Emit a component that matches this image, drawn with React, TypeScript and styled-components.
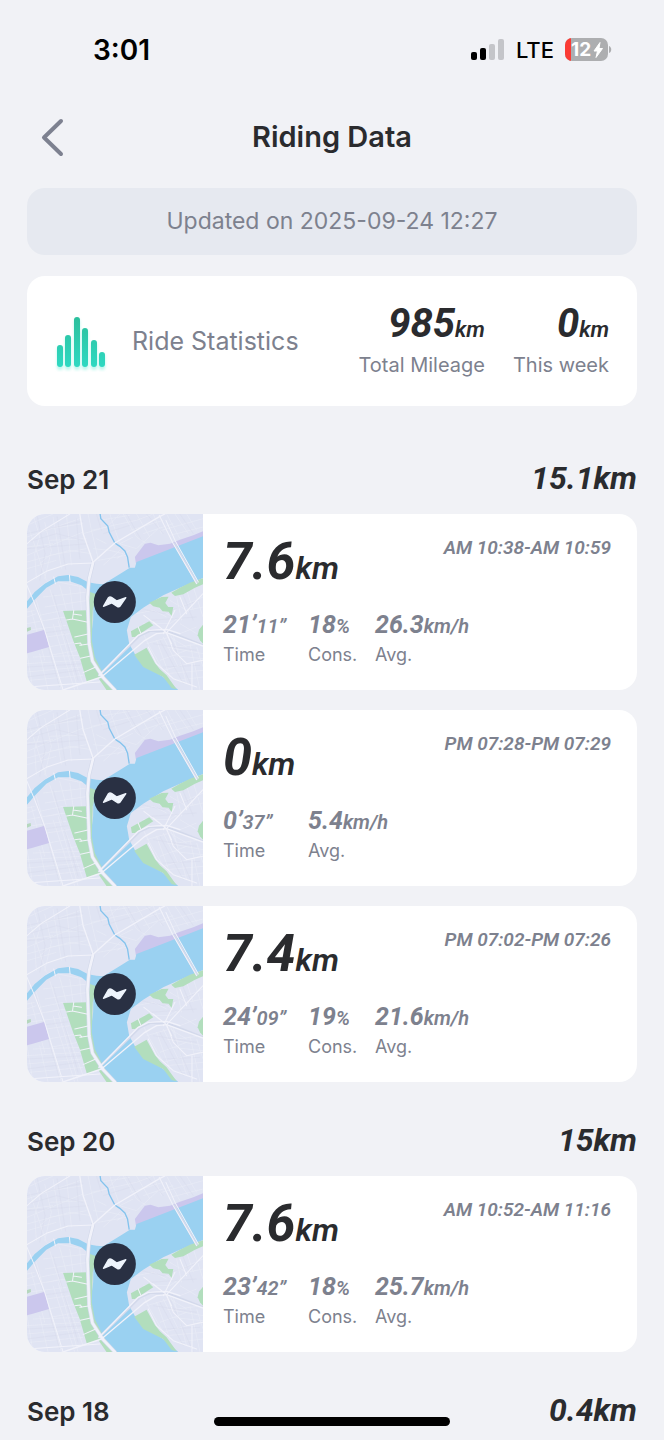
import React from "react";
import styled, { createGlobalStyle } from "styled-components";

const color = {
  page: "#f1f2f6",
  ink: "#2a2b2e",
  muted: "#7d818e",
  card: "#ffffff",
  banner: "#e6e9f0",
};

const sans = `Inter, "Liberation Sans", sans-serif`;
const numeric = `Roboto, "Liberation Sans", sans-serif`;

const GlobalStyle = createGlobalStyle`
  *, *::before, *::after { box-sizing: border-box; }
  body {
    margin: 0;
    background: ${color.page};
    color: ${color.ink};
    font-family: ${sans};
  }
  h1, h2, p, ul, dl, dd { margin: 0; padding: 0; }
  ul { list-style: none; }
`;

const Screen = styled.div`
  min-height: 100vh;
  background: ${color.page};
`;

const StatusBar = styled.div`
  display: flex;
  justify-content: space-between;
  align-items: center;
  height: 100px;
  padding: 0 52px 0 93px;
  color: #000;
`;

const Clock = styled.time`
  font-size: 28px;
  line-height: 32px;
  font-weight: 600;
`;

const StatusIcons = styled.div`
  display: flex;
  align-items: center;
  gap: 11px;
  font-size: 22px;
  line-height: 28px;
  font-weight: 500;
`;

const BatteryText = styled.text`
  font-family: ${sans};
  font-size: 19px;
  font-weight: 700;
  fill: #fff;
`;

const NavBar = styled.header`
  display: grid;
  grid-template-columns: 48px 1fr 48px;
  align-items: center;
  height: 74px;
  padding: 0 28px;
`;

const BackButton = styled.button`
  display: flex;
  align-items: center;
  justify-content: center;
  width: 48px;
  height: 48px;
  padding: 0;
  border: 0;
  background: none;
  cursor: pointer;
`;

const Title = styled.h1`
  font-size: 29px;
  line-height: 36px;
  font-weight: 600;
  text-align: center;
`;

const Content = styled.main`
  padding: 14px 27px 0;
`;

const Banner = styled.p`
  padding: 18px 20px;
  border-radius: 18px;
  background: ${color.banner};
  color: ${color.muted};
  font-size: 23px;
  line-height: 31px;
  text-align: center;
`;

const StatsCard = styled.section`
  display: flex;
  align-items: center;
  margin: 21px 0 54px;
  padding: 24px 28px 24px 24px;
  min-height: 130px;
  border-radius: 18px;
  background: ${color.card};
`;

const StatsTitle = styled.h2`
  flex: 1;
  margin-left: 21px;
  color: ${color.muted};
  font-size: 25px;
  line-height: 32px;
  font-weight: 400;
`;

const Totals = styled.dl`
  display: flex;
  gap: 28px;
`;

const Total = styled.div`
  display: flex;
  flex-direction: column-reverse;
  text-align: right;
`;

const Label = styled.dt<{ $size: number }>`
  color: ${color.muted};
  font-size: ${(p) => p.$size}px;
  line-height: 28px;
`;

const TotalValue = styled.dd`
  font: italic 700 40px/42px ${numeric};
`;

const Unit = styled.span<{ $size: number }>`
  font-size: ${(p) => p.$size}px;
  font-weight: 600;
`;

const Day = styled.section`
  margin-bottom: 40px;

  &:last-child { margin-bottom: 0; }
`;

const DayHeader = styled.div`
  display: flex;
  justify-content: space-between;
  align-items: baseline;
  height: 40px;
`;

const DayName = styled.h2`
  font-size: 26px;
  line-height: 40px;
  font-weight: 600;
`;

const DayTotal = styled.p`
  font: italic 700 32px/36px ${numeric};
`;

const RideList = styled.ul`
  display: flex;
  flex-direction: column;
  gap: 20px;
  margin-top: 14px;
`;

const RideCard = styled.li`
  display: flex;
  min-height: 176px;
  border-radius: 18px;
  background: ${color.card};
  overflow: hidden;
`;

const MapArt = styled.svg`
  flex: none;
  width: 176px;
  height: 176px;
`;

const RideBody = styled.div`
  flex: 1;
  padding: 21px 26px 0 20px;
`;

const RideTop = styled.div`
  display: flex;
  justify-content: space-between;
  align-items: flex-start;
`;

const Distance = styled.p`
  font: italic 700 52px/54px ${numeric};
`;

const Period = styled.p`
  color: ${color.muted};
  font: italic 600 19px/26px ${numeric};
`;

const Metrics = styled.dl`
  display: flex;
  margin-top: 15px;
`;

const Metric = styled.div<{ $width: number }>`
  display: flex;
  flex-direction: column-reverse;
  min-width: ${(p) => p.$width}px;
`;

const MetricValue = styled.dd`
  color: ${color.muted};
  font: italic 700 25px/30px ${numeric};
`;

const HomeIndicator = styled.div`
  position: fixed;
  bottom: 14px;
  left: 50%;
  width: 236px;
  height: 9px;
  margin-left: -118px;
  border-radius: 5px;
  background: #000;
`;

function Signal() {
  return (
    <svg width="34" height="22" viewBox="0 0 34 22" role="img" aria-label="Signal: 2 of 4 bars">
      <rect x="0" y="13" width="6" height="8" rx="2" />
      <rect x="9" y="9" width="6" height="12" rx="2" />
      <rect x="18" y="5" width="6" height="16" rx="2" fill="#c4c5c9" />
      <rect x="27" y="0" width="6" height="21" rx="2" fill="#c4c5c9" />
    </svg>
  );
}

function Battery() {
  return (
    <svg width="47" height="24" viewBox="0 0 47 24" role="img" aria-label="Battery 12%, charging">
      <clipPath id="battery-shell">
        <rect width="43" height="23" rx="7" />
      </clipPath>
      <g clipPath="url(#battery-shell)">
        <rect width="43" height="23" fill="#adaeb0" />
        <rect width="6" height="23" fill="#fb3b35" />
      </g>
      <path d="M44 8c3 1 3 6 0 7z" fill="#adaeb0" />
      <BatteryText x="6" y="18">12</BatteryText>
      <path d="M35 4.500L29 13H32.500L31 19.500L37.500 10.500H34z" fill="#fff" stroke="#fff" strokeLinejoin="round" />
    </svg>
  );
}

const bars = [
  { x: 4, top: 31 },
  { x: 12, top: 21 },
  { x: 21, top: 3 },
  { x: 29, top: 14 },
  { x: 38, top: 26 },
  { x: 46, top: 38 },
];

function BarsIcon() {
  return (
    <svg width="60" height="62" viewBox="-2 -4 60 62" aria-hidden="true">
      <defs>
        <linearGradient id="bar-fill" gradientUnits="userSpaceOnUse" x1="0" y1="3" x2="0" y2="53">
          <stop offset="0" stopColor="#2bbf9c" />
          <stop offset="1" stopColor="#2fd9c2" />
        </linearGradient>
        <filter id="bar-glow" x="-20%" y="-20%" width="140%" height="140%">
          <feGaussianBlur stdDeviation="1.500" />
        </filter>
      </defs>
      <g fill="#8af0df" opacity="0.600" filter="url(#bar-glow)">
        {bars.map((b) => (
          <rect key={b.x} x={b.x} y={b.top + 2} width="6" height={54 - b.top} rx="3" />
        ))}
      </g>
      <g fill="url(#bar-fill)">
        {bars.map((b) => (
          <rect key={b.x} x={b.x} y={b.top} width="6" height={53 - b.top} rx="3" />
        ))}
      </g>
    </svg>
  );
}

function RideMap() {
  return (
    <MapArt viewBox="22 41 527 528" preserveAspectRatio="none" role="img" aria-label="Ride map">
      <rect x="20" y="40" width="532" height="532" fill="#e0e4f3" />
      {/* side streets */}
      <g fill="none" stroke="#e8ebf6" strokeWidth="2">
        <path d="M22 75L100 41M22 165L190 95M22 185L150 150L215 160M40 41L60 110L45 160L50 235M75 65L95 150L75 235M100 50L125 205M140 41L155 195M22 110L180 55M60 90L190 70M22 205L110 180M90 120L200 115M60 190L90 165L200 145M22 140L100 130M30 90L80 240" />
        <path d="M205 41L215 90L260 80L300 41M215 90L235 175M190 100L280 75M240 60L330 45M270 41L300 130L340 110M220 145L270 150L310 160M235 180L320 165M250 195L300 150M300 130L350 145L420 80M280 75L350 60L400 41M310 41L350 110L380 130M330 90L430 60M350 41L390 110M400 41L425 100M440 41L480 115M465 41L505 100M500 41L530 90M425 90L549 55M450 105L549 80M370 100L460 70M290 175L330 150M230 115L260 130" />
        <path d="M60 260L90 240L190 260M70 290L205 275M75 320L205 300M60 345L130 330M80 360L140 350M35 330L75 480M50 300L125 569M90 265L110 330L190 550M120 255L140 330M150 260L160 330M180 260L185 330M22 370L130 350M22 390L140 375M80 410L150 400M85 440L170 425M90 465L175 450M22 490L180 480M22 515L185 500M30 540L190 525M100 370L165 569M22 460L40 569M60 460L85 569M115 360L150 480L175 569M40 470L190 465M22 350L50 340M22 335L45 330" />
        <path d="M345 300L380 290M350 340L400 330L440 350M370 370L450 370L510 330M400 310L470 360M450 300L500 330L549 320M470 290L485 360M500 270L520 330M520 260L549 350M460 330L549 290M450 400L470 440L549 430M380 430L450 410L500 440M390 440L430 510L540 480M410 420L450 530M430 410L475 500M460 405L500 550M340 410L370 400L390 440M480 400L530 380M420 480L500 450M440 520L549 510M470 540L549 530M510 430L540 569M480 370L530 400M530 440L549 500M440 440L549 460M455 465L549 475" />
      </g>
      <g fill="none" stroke="#d3d8ea" strokeWidth="1">
        <path d="M22 100L190 62M22 126L110 100L190 120M52 45L76 160L60 240M112 48L138 208M170 55L180 175M230 41L245 90M250 100L330 75M320 41L365 120M380 41L430 100M480 41L520 100M22 145L205 130M45 300L120 560M100 280L175 540M22 405L145 388M22 500L190 490M22 530L180 510M345 320L430 340L535 300M390 360L530 350M400 430L530 450M430 500L540 495M450 410L520 569M420 420L490 550M480 260L520 360" />
      </g>
      {/* districts and parks */}
      <path d="M22 403L75 388L88 440L34 456L22 459z" fill="#cbc7ed" />
      <path d="M345 170L375 130L392 127L415 135L450 130L480 118L520 105L549 93V140L350 200z" fill="#cbc7ed" />
      <path d="M130 332L202 330L208 370L211 440L222 490L240 530L202 547L180 470L160 420z" fill="#b2debd" />
      <path d="M22 383L33 380L34 389L22 394z" fill="#b5d7bd" />
      {/* river */}
      <path
        d="M549 108L350 185L345 202H330L305 218L250 252L230 250L205 246L175 230L145 224L115 228L75 250L45 275L22 303V325L45 298L80 262L115 243L150 243L185 255L210 275L221 300L220 360L210 440L225 490L250 530L280 569H475L430 530L385 502L350 470L328 430L321 390L333 350L370 322L430 285L480 262L549 233z"
        fill="#9ad1f1"
      />
      <path d="M241 41L243 55L264 77L268 95L285 128L300 138L315 152L323 170L328 202" fill="none" stroke="#83c3ed" strokeWidth="4" />
      {/* banks */}
      <path d="M211 275L230 282L219 330L216 420L225 470L252 525L288 569H260L230 525L208 440L204 330z" fill="#b2debd" />
      <path d="M549 234L510 247L480 262L454 277L465 287L490 282L525 262L549 252z" fill="#b2debd" />
      <path d="M388 307L425 290L446 289L436 308L445 320H460L455 347L446 334L428 333L419 322L400 318z" fill="#b2debd" />
      <path d="M333 393L388 363L400 375L345 410L336 410z" fill="#b2debd" />
      <path d="M343 463L380 442L405 488L420 507L440 525L470 567L455 563L430 530L400 515L370 500z" fill="#b2debd" />
      <path d="M549 373L537 388L533 405L540 420L549 430z" fill="#b2debd" />
      {/* main roads */}
      <g fill="none" stroke="#d3d9eb" strokeLinecap="round" strokeLinejoin="round">
        <path d="M220 186L208 235L203 290L208 430L218 482L250 532L285 569" strokeWidth="12" />
        <path d="M463 130L530 247M238 525L360 405L392 391L450 396L549 435" strokeWidth="7" />
      </g>
      <g fill="none" stroke="#f1f2fa" strokeLinecap="round" strokeLinejoin="round">
        <path d="M220 186L208 235L203 290L208 430L218 482L250 532L285 569" strokeWidth="8" />
        <path d="M180 41L190 100L220 186L260 150L285 128L420 48L435 41M130 569L245 530L375 420L410 400L440 397L549 437M238 525L355 405L385 390L440 387L480 400" strokeWidth="4" />
        <path d="M418 45L460 130L530 250M438 60L468 126L535 245" strokeWidth="3" />
        <path d="M22 130L65 93L150 41M22 247L80 213L145 191L220 188M22 255L45 310L75 390L130 569M440 397L549 280M440 397L372 345M440 397L460 450L500 490L549 480M440 397L400 365M22 560L240 545M516 490V569M385 440L410 490L460 535L530 560M465 330L430 400M480 290L500 340M440 400L455 430" strokeWidth="3" />
        <path d="M102 230L107 250M149 224L151 245M162 330L158 357M140 359L158 356L201 365M160 341L185 345M165 410L208 400M165 430L182 428L186 435M180 435L212 430M182 474L216 466M190 517L228 500M355 380L362 397" strokeWidth="3" />
      </g>
      {/* ride marker */}
      <circle cx="285" cy="305" r="63" fill="#293043" />
      <path
        d="M251 318L266 292Q270 288 275 291L291 302L318 292L301 317Q297 321 292 318L276 308z"
        fill="#eef4fc"
        stroke="#eef4fc"
        strokeWidth="4"
        strokeLinejoin="round"
      />
    </MapArt>
  );
}

type Reading = { value: string; unit: string; label: string; width: number };
type Ride = { distance: string; period: string; readings: Reading[] };
type DayData = { name: string; total: string; rides: Ride[] };

const time = (value: string, minor: string): Reading => ({ value: `${value}’`, unit: `${minor}”`, label: "Time", width: 85 });
const cons = (value: string): Reading => ({ value, unit: "%", label: "Cons.", width: 67 });
const avg = (value: string): Reading => ({ value, unit: "km/h", label: "Avg.", width: 98 });

const days: DayData[] = [
  {
    name: "Sep 21",
    total: "15.1km",
    rides: [
      { distance: "7.6", period: "AM 10:38-AM 10:59", readings: [time("21", "11"), cons("18"), avg("26.3")] },
      { distance: "0", period: "PM 07:28-PM 07:29", readings: [time("0", "37"), avg("5.4")] },
      { distance: "7.4", period: "PM 07:02-PM 07:26", readings: [time("24", "09"), cons("19"), avg("21.6")] },
    ],
  },
  {
    name: "Sep 20",
    total: "15km",
    rides: [{ distance: "7.6", period: "AM 10:52-AM 11:16", readings: [time("23", "42"), cons("18"), avg("25.7")] }],
  },
  { name: "Sep 18", total: "0.4km", rides: [] },
];

const totals = [
  { value: "985", label: "Total Mileage" },
  { value: "0", label: "This week" },
];

export default function App() {
  return (
    <Screen>
      <GlobalStyle />
      <StatusBar>
        <Clock>3:01</Clock>
        <StatusIcons>
          <Signal />
          <span>LTE</span>
          <Battery />
        </StatusIcons>
      </StatusBar>
      <NavBar>
        <BackButton type="button" aria-label="Back">
          <svg width="24" height="40" viewBox="0 0 24 40" fill="none" stroke="#7d8190" strokeWidth="4" strokeLinecap="round" strokeLinejoin="round" aria-hidden="true">
            <path d="M21 4L4 20.500L21 37" />
          </svg>
        </BackButton>
        <Title>Riding Data</Title>
      </NavBar>
      <Content>
        <Banner>Updated on 2025-09-24 12:27</Banner>
        <StatsCard>
          <BarsIcon />
          <StatsTitle>Ride Statistics</StatsTitle>
          <Totals>
            {totals.map((t) => (
              <Total key={t.label}>
                <Label $size={20}>{t.label}</Label>
                <TotalValue>
                  {t.value}
                  <Unit $size={22}>km</Unit>
                </TotalValue>
              </Total>
            ))}
          </Totals>
        </StatsCard>
        {days.map((day) => (
          <Day key={day.name}>
            <DayHeader>
              <DayName>{day.name}</DayName>
              <DayTotal>{day.total}</DayTotal>
            </DayHeader>
            {day.rides.length > 0 && (
              <RideList>
                {day.rides.map((ride) => (
                  <RideCard key={ride.period}>
                    <RideMap />
                    <RideBody>
                      <RideTop>
                        <Distance>
                          {ride.distance}
                          <Unit $size={32}>km</Unit>
                        </Distance>
                        <Period>{ride.period}</Period>
                      </RideTop>
                      <Metrics>
                        {ride.readings.map((r) => (
                          <Metric key={r.label} $width={r.width}>
                            <Label $size={18}>{r.label}</Label>
                            <MetricValue>
                              {r.value}
                              <Unit $size={20}>{r.unit}</Unit>
                            </MetricValue>
                          </Metric>
                        ))}
                      </Metrics>
                    </RideBody>
                  </RideCard>
                ))}
              </RideList>
            )}
          </Day>
        ))}
      </Content>
      <HomeIndicator />
    </Screen>
  );
}
